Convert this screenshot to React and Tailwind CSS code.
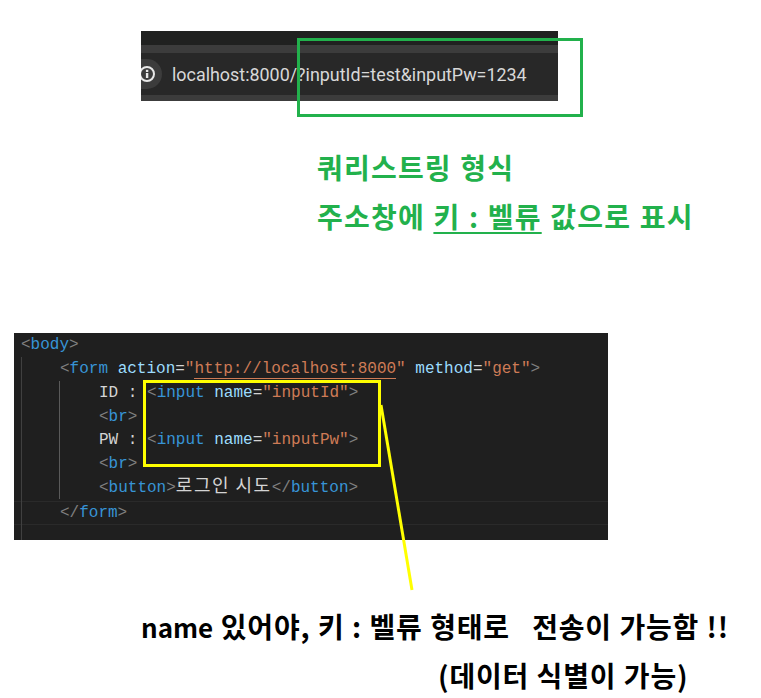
const kr = { fontFamily: '"Noto Sans CJK KR", "Noto Sans", sans-serif' };
const A = ({ children }) => <span className="text-[#9cdcfe]">{children}</span>;
const T = ({ children }) => <span className="text-[#808080]">{children}</span>;
const N = ({ children }) => <span className="text-[#3794d6]">{children}</span>;
const S = ({ children }) => <span className="text-[#ce7b56]">{children}</span>;
const E = () => <span className="text-[#d4d4d4]">=</span>;

function Line({ indent, children, cls = "" }) {
  const pad = ["pl-[7px]", "pl-[46px]", "pl-[85px]"][indent];
  return <div className={`h-[23.85px] leading-[23.85px] whitespace-pre ${pad} ${cls}`}>{children}</div>;
}

export default function App() {
  return (
    <div className="relative w-[761px] h-[698px] bg-white overflow-hidden" style={kr}>
      <div className="pt-[31px] pl-[141px]">
        <div className="w-[417px] h-[70px] flex flex-col bg-[#282828]">
          <div className="h-[14px] bg-[#202120]" />
          <div className="h-[8px] bg-[#3c3c3c]" />
          <div className="h-[42px] flex items-center overflow-hidden">
            <div className="w-[21px] h-[30px] rounded-r-full bg-[#3c3c3c] flex items-center justify-end pr-[6px] shrink-0">
              <svg className="shrink-0" width="18" height="18" viewBox="0 0 18 18">
                <circle cx="9" cy="9" r="7" fill="none" stroke="#e8e8e8" strokeWidth="2" />
                <rect x="7.9" y="8" width="2.4" height="5" fill="#e8e8e8" />
                <rect x="7.9" y="4.8" width="2.4" height="2.2" fill="#e8e8e8" />
              </svg>
            </div>
            <span className="ml-[10px] mt-[2px] text-[17.9px] text-[#d8d8d8] whitespace-pre" style={{ fontFamily: '"Roboto", sans-serif' }}>
              localhost:8000/?inputId=test&amp;inputPw=1234
            </span>
          </div>
          <div className="h-[6px] bg-[#3c3c3c]" />
        </div>
      </div>

      <div className="mt-[42px] ml-[317px] text-[#22b14c] font-bold text-[28px] leading-[49px] whitespace-pre tracking-[1.2px] [word-spacing:1px]">
        <div>쿼리스트링 형식</div>
        <div>
          주소창에 <span className="underline decoration-2 underline-offset-4">키 : 벨류</span> 값으로 표시
        </div>
      </div>

      <div className="mt-[92px] ml-[14px] w-[594px] h-[207px] bg-[#1f1f1f] text-[16px] text-[#d4d4d4] pt-[1px] relative" style={{ fontFamily: '"Liberation Mono", monospace' }}>
        <Line indent={0}><T>&lt;</T><N>body</N><T>&gt;</T></Line>
        <Line indent={1}><T>&lt;</T><N>form</N> <A>action</A><E /><S>"<span className="border-b border-[#ce7b56]">http://localhost:8000</span>"</S> <A>method</A><E /><S>"get"</S><T>&gt;</T></Line>
        <Line indent={2}>ID : <T>&lt;</T><N>input</N> <A>name</A><E /><S>"inputId"</S><T>&gt;</T></Line>
        <Line indent={2}><T>&lt;</T><N>br</N><T>&gt;</T></Line>
        <Line indent={2}>PW : <T>&lt;</T><N>input</N> <A>name</A><E /><S>"inputPw"</S><T>&gt;</T></Line>
        <Line indent={2}><T>&lt;</T><N>br</N><T>&gt;</T></Line>
        <Line indent={2}><T>&lt;</T><N>button</N><T>&gt;</T><span className="text-[18px] leading-[10px] tracking-[1.5px]" style={kr}>로그인 시도</span><T>&lt;/</T><N>button</N><T>&gt;</T></Line>
        <Line indent={1} cls="border-y border-[#2a2a2a]"><T>&lt;/</T><N>form</N><T>&gt;</T></Line>
        <div className="absolute left-[7px] top-[24px] bottom-0 w-px bg-[#404040]" />
        <div className="absolute left-[45px] top-[48px] h-[118px] w-px bg-[#5a5a5a]" />
      </div>

      <div className="mt-[62px] ml-[141px] text-black font-bold text-[28px] leading-[49px] whitespace-pre tracking-[0.8px] [word-spacing:0.4px]">
        <div><span className="text-[26px] tracking-normal">name</span> 있어야, 키 : 벨류 형태로<span className="tracking-[4.4px]">  </span>전송이 가능함 !!</div>
        <div className="ml-[297px]">(데이터 식별이 가능)</div>
      </div>

      <div className="absolute left-[297px] top-[38px] w-[286px] h-[79px] border-[3px] border-[#22b14c]" />
      <div className="absolute left-[143px] top-[380px] w-[238px] h-[87px] border-[3px] border-[#ffff00]" />
      <svg className="absolute left-0 top-0" width="761" height="698" fill="none">
        <path d="M381 405 L412 590" stroke="#ffff00" strokeWidth="3" />
      </svg>
    </div>
  );
}
